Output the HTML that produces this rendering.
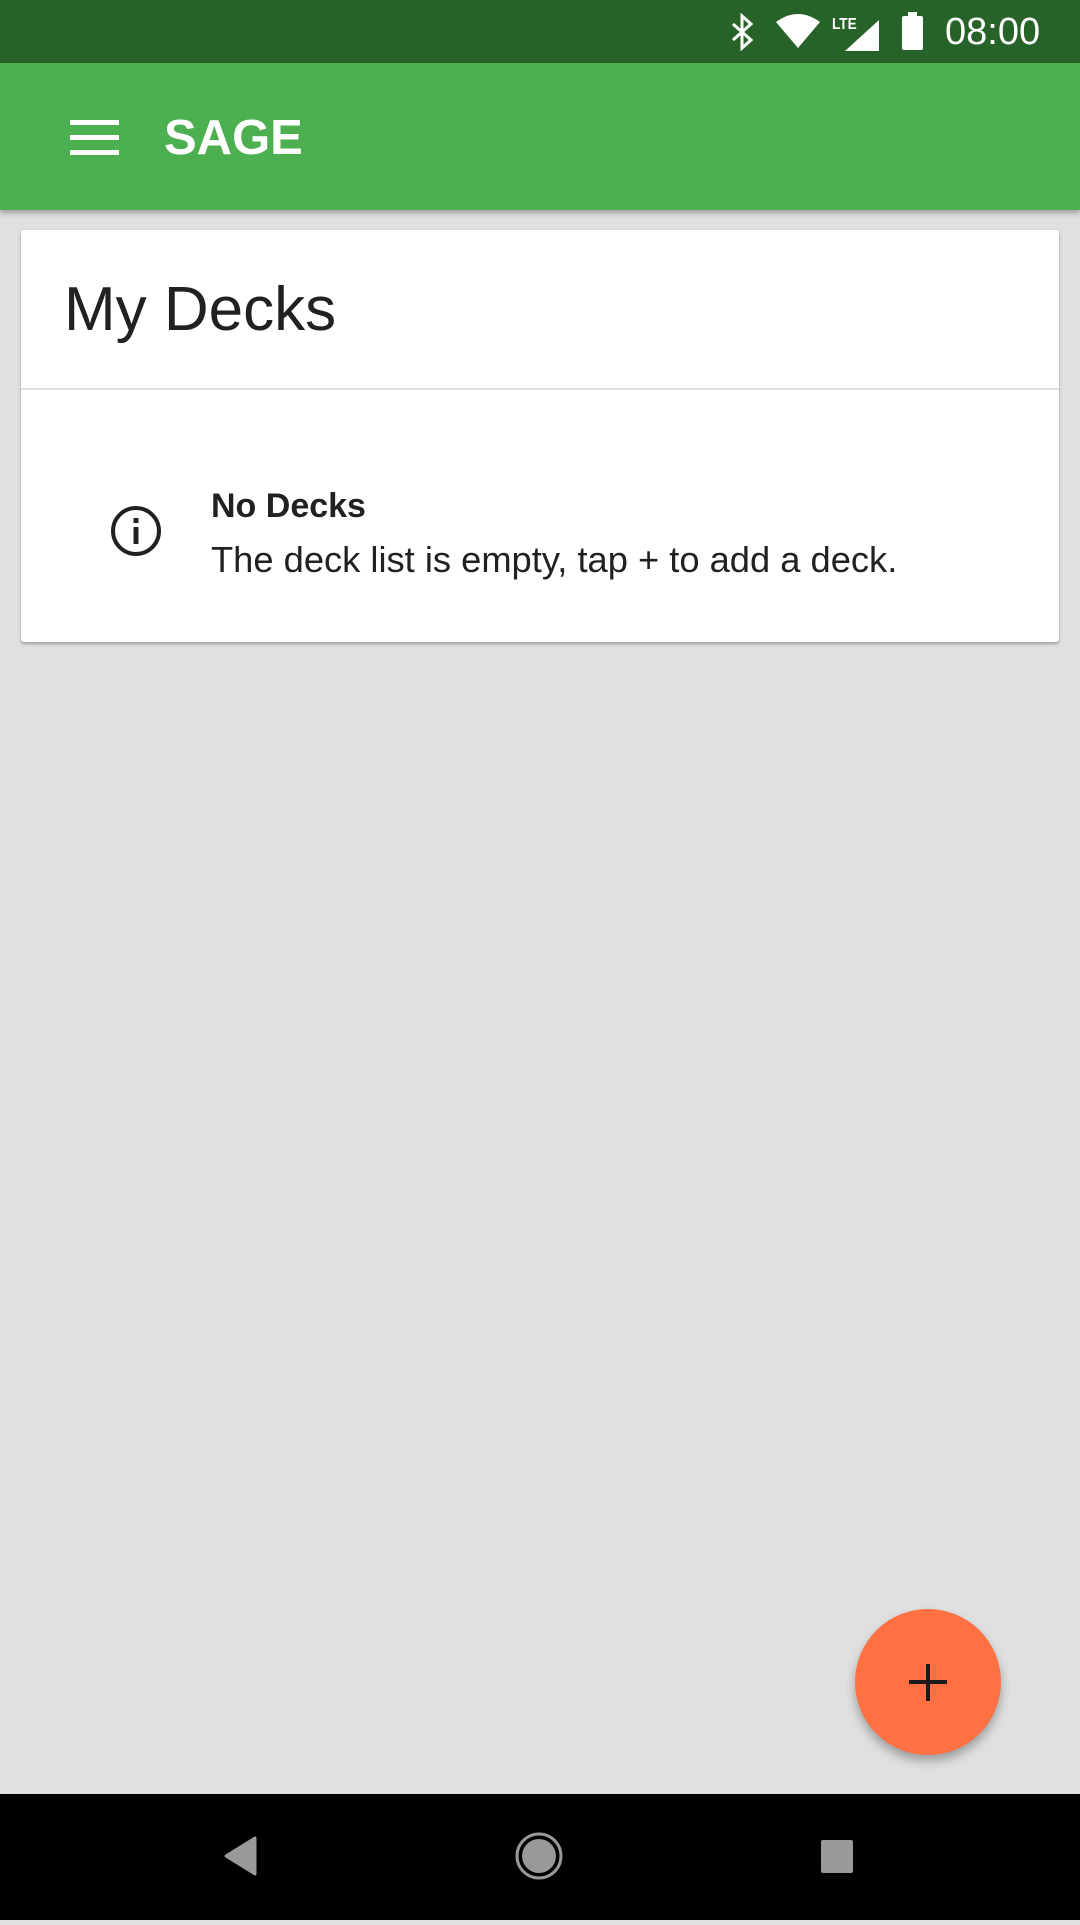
<!DOCTYPE html>
<html><head><meta charset="utf-8"><style>
*{margin:0;padding:0;box-sizing:border-box}
body{width:1080px;height:1920px;background:#e0e0e0;font-family:"Liberation Sans",sans-serif;position:relative;overflow:hidden}
.sb{position:absolute;left:0;top:0;width:1080px;height:63px;background:#276229}
.ab{position:absolute;left:0;top:63px;width:1080px;height:147px;background:#4caf50;box-shadow:0 3px 5px rgba(0,0,0,.3)}
.card{position:absolute;left:21px;top:230px;width:1038px;height:412px;background:#fff;border-radius:3px;box-shadow:0 2px 3px rgba(0,0,0,.3)}
.t{position:absolute;white-space:nowrap;color:#212121}
.nav{position:absolute;left:0;top:1794px;width:1080px;height:126px;background:#000}
.fab{position:absolute;left:855px;top:1609px;width:146px;height:146px;border-radius:50%;background:#ff7043;box-shadow:0 6px 10px rgba(0,0,0,.3)}
</style></head><body>
<div class="sb">
<svg width="1080" height="63" style="position:absolute;left:0;top:0">
<path d="M733 24 L751 40 L742 48 L742 16 L751 24 L733 40" stroke="#fff" stroke-width="3" fill="none"/>
<path d="M776 22 Q798 6 820 22 L798 48 Z" fill="#fff"/>
<path d="M879 20 L879 51 L845 51 Z" fill="#fff"/>
<text x="832" y="29" font-family="Liberation Sans" font-size="16" font-weight="bold" fill="#fff" transform="scale(0.85,1)" style="transform-origin:832px 0">LTE</text>
<rect x="902" y="16" width="21" height="34" rx="2" fill="#fff"/><rect x="908" y="12" width="9" height="5" fill="#fff"/>
</svg>
<div class="t" style="left:945px;top:11px;font-size:38px;color:#fff">08:00</div>
</div>
<div class="ab">
<div style="position:absolute;left:70px;top:57px;width:49px;height:5px;background:#fff"></div>
<div style="position:absolute;left:70px;top:72px;width:49px;height:5px;background:#fff"></div>
<div style="position:absolute;left:70px;top:87px;width:49px;height:5px;background:#fff"></div>
<div class="t" style="left:164px;top:47px;font-size:49px;font-weight:bold;color:#fff">SAGE</div>
</div>
<div class="card">
<div class="t" style="left:43px;top:44px;font-size:62px">My Decks</div>
<div style="position:absolute;left:0;top:158px;width:1038px;height:2px;background:#e0e0e0"></div>
<svg width="60" height="60" style="position:absolute;left:85px;top:271px">
<circle cx="30" cy="30" r="23" stroke="#212121" stroke-width="4" fill="none"/>
<rect x="27.5" y="26" width="5" height="17" fill="#212121"/><rect x="27.5" y="17" width="5" height="5" fill="#212121"/>
</svg>
<div class="t" style="left:190px;top:257px;font-size:34px;font-weight:bold">No Decks</div>
<div class="t" style="left:190px;top:309px;font-size:36.3px">The deck list is empty, tap + to add a deck.</div>
</div>
<div class="fab">
<div style="position:absolute;left:54px;top:71px;width:38px;height:4px;background:#1a1a1a"></div>
<div style="position:absolute;left:71px;top:55px;width:4px;height:37px;background:#1a1a1a"></div>
</div>
<div class="nav">
<svg width="1080" height="126">
<path d="M255 44 L255 80 L226 62 Z" fill="#999" stroke="#999" stroke-width="3" stroke-linejoin="round"/>
<circle cx="539" cy="62" r="22" stroke="#999" stroke-width="3" fill="none"/>
<circle cx="539" cy="62" r="17" fill="#999"/>
<rect x="821" y="46" width="32" height="33" rx="2" fill="#999"/>
</svg>
</div>
</body></html>
